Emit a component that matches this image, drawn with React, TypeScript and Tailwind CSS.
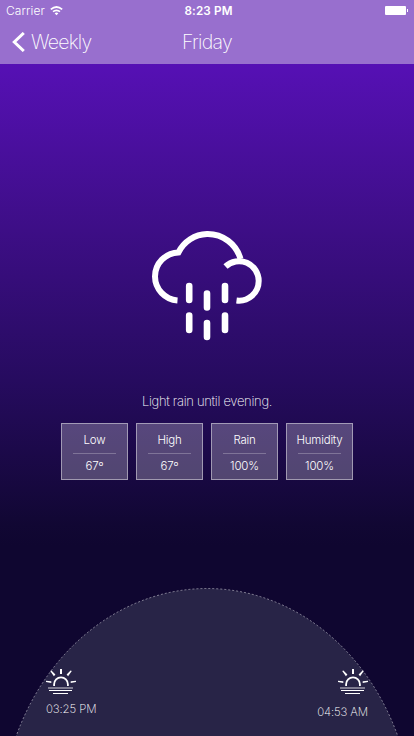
import React from "react";

const font = "font-['Inter','Liberation_Sans',sans-serif]";

function StatusBar() {
  return (
    <div className="grid h-5 grid-cols-3 items-center text-[12px] leading-5">
      <div className="flex items-center gap-[5px] pl-[6px] pt-px">
        <span className="font-light tracking-[0.1px]">Carrier</span>
        <svg className="-mt-px" width="13" height="10" viewBox="0 0 13 10" fill="none" stroke="white" strokeWidth="1.7">
          <path d="M0.8 3.4 Q6.5 -1.4 12.2 3.4" />
          <path d="M3 5.7 Q6.5 2.9 10 5.7" />
          <path d="M4.6 7.3 Q6.5 5.9 8.4 7.3 L6.5 9.3 Z" fill="white" stroke="none" />
        </svg>
      </div>
      <div className="pt-px text-center text-[11.7px] font-semibold tracking-[0.15px]">
        <span className="ml-[3px]">8:23 PM</span>
      </div>
      <div className="flex items-center justify-end gap-px pr-[6px]">
        <div className="h-[9px] w-[21px] rounded-[1px] bg-white" />
        <div className="h-[3px] w-px bg-white" />
      </div>
    </div>
  );
}

function NavBar() {
  return (
    <div className="grid h-11 grid-cols-3 items-center text-[19.5px] font-extralight leading-6">
      <div className="flex items-center gap-[6px] pl-[12px]">
        <svg width="13" height="20" viewBox="0 0 13 20" fill="none" stroke="white" strokeWidth="3">
          <path d="M11.8 1 L2.3 10 L11.8 19" />
        </svg>
        <span className="tracking-[-0.75px]">Weekly</span>
      </div>
      <div className="text-center tracking-[-0.7px]">Friday</div>
    </div>
  );
}

function RainCloud() {
  return (
    <svg
      className="mx-auto block"
      width="112"
      height="112"
      viewBox="151 230 112 112"
      fill="none"
      stroke="white"
      strokeWidth="6"
    >
      <path d="M177.5 300.4 A24.2 24.2 0 0 1 155 276.5 A24.2 24.2 0 0 1 178.5 252.4 A33 33 0 0 1 207 234 A34 34 0 0 1 240.5 259" />
      <path d="M225.5 266.5 A19.7 19.7 0 0 1 258.7 281 A19.7 19.7 0 0 1 236.5 300.5" />
      <path
        d="M189.2 286 V300 M225 286 V300 M207 293.5 V307.5 M189.2 315.5 V330 M225 315.5 V330 M207 323 V337"
        strokeLinecap="round"
        strokeWidth="6.6"
      />
    </svg>
  );
}

function Stat({ label, value }: { label: string; value: string }) {
  return (
    <div className="flex h-[57px] w-[67px] flex-col items-center border border-white/45 bg-white/25 pt-[7px] text-[11.5px] font-light">
      <div className="h-[18px] leading-[18px] tracking-[-0.2px]">{label}</div>
      <div className="mt-1 h-px w-[43px] bg-white/25" />
      <div className="mt-[3px] h-[18px] leading-[18px] tracking-[-0.15px]">{value}</div>
    </div>
  );
}

function Sun() {
  return (
    <svg width="32" height="26" viewBox="0 0 32 26" fill="none" stroke="white">
      <path d="M9.1 18 V16.3 A6.9 6.9 0 0 1 22.9 16.3 V18" strokeWidth="1.8" />
      <path
        d="M15 1 H17 V6 H15 Z M5.2 3 L6.4 2.4 L10.4 6.6 L8.9 8.2 Z M26.8 3 L25.6 2.4 L21.6 6.6 L23.1 8.2 Z M1 12.7 L6.3 13.2 V15 L1 13.9 Z M31 12.7 L25.7 13.2 V15 L31 13.9 Z"
        fill="white"
        stroke="none"
      />
      <path d="M3 20 H28" strokeWidth="2" strokeOpacity="0.4" />
      <path d="M4 22.5 H27" strokeWidth="1" />
      <path d="M8 25.5 H23" strokeWidth="1" />
    </svg>
  );
}

function SunArc() {
  return (
    <div className="relative h-[148px] overflow-hidden">
      <svg className="absolute inset-0" width="414" height="148" viewBox="0 588 414 148">
        <ellipse
          cx="207"
          cy="827.5"
          rx="206.5"
          ry="239"
          fill="#282447"
          stroke="white"
          strokeOpacity="0.5"
          strokeWidth="0.9"
          strokeDasharray="2 2"
        />
      </svg>
      <div className="relative flex justify-between px-[45px] pt-[80px] text-[11.5px] font-extralight leading-4 tracking-[-0.12px]">
        <div>
          <Sun />
          <div className="ml-px mt-[7px]">03:25 PM</div>
        </div>
        <div className="flex flex-col items-end">
          <Sun />
          <div className="mr-px mt-[10px]">04:53 AM</div>
        </div>
      </div>
    </div>
  );
}

export default function App() {
  return (
    <div
      className={`flex h-[736px] w-[414px] flex-col overflow-hidden bg-[linear-gradient(180deg,#5a11be_0px,#5510b3_70px,#3d0e86_230px,#260b5f_380px,#110733_525px,#0f0630_545px)] text-white ${font}`}
    >
      <header className="h-16 shrink-0 bg-[#986fce]">
        <StatusBar />
        <NavBar />
      </header>
      <main className="flex flex-1 flex-col">
        <div className="pt-[166px]">
          <RainCloud />
        </div>
        <p className="mt-[50px] text-center text-[13px] font-extralight leading-[18px] tracking-[-0.3px]">
          Light rain until evening.
        </p>
        <div className="mt-[13px] flex justify-center gap-2">
          <Stat label="Low" value="67º" />
          <Stat label="High" value="67º" />
          <Stat label="Rain" value="100%" />
          <Stat label="Humidity" value="100%" />
        </div>
      </main>
      <SunArc />
    </div>
  );
}
